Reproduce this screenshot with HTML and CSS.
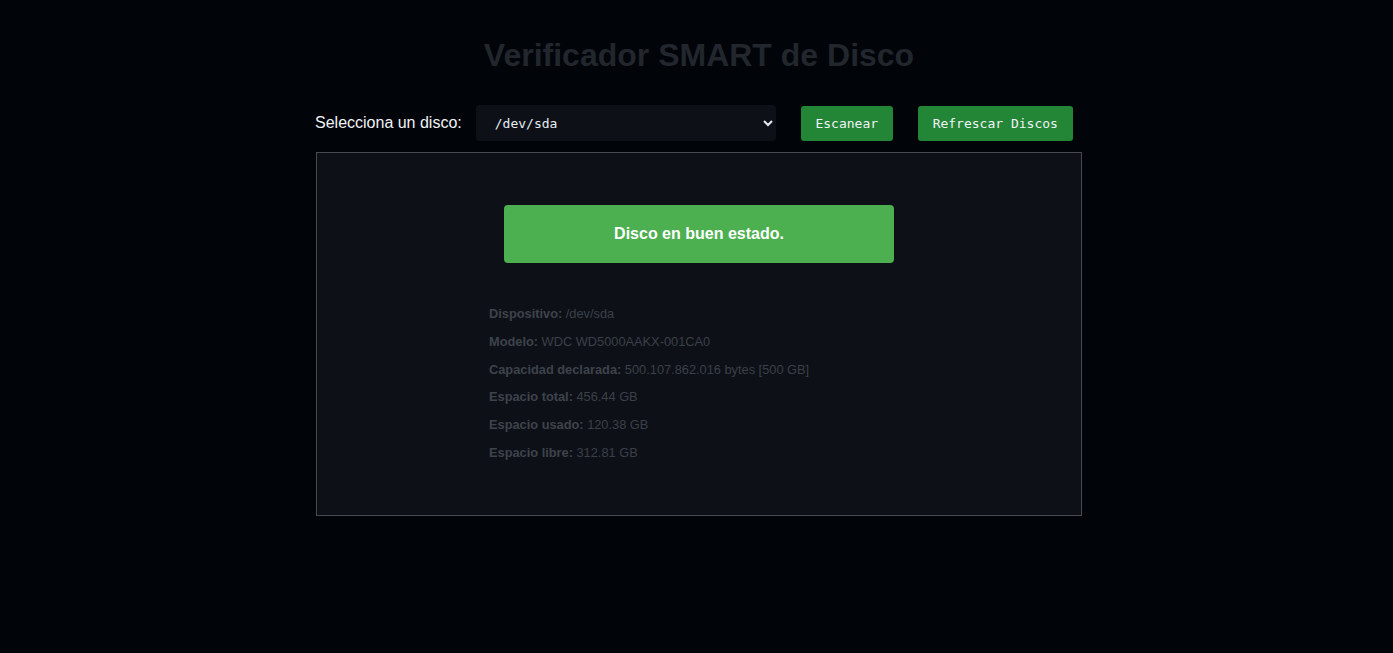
FILE: index.html
```html
<!DOCTYPE html>
<html lang="es">
<head>
<meta charset="utf-8">
<title>Verificador SMART de Disco</title>
<link rel="stylesheet" href="styles.css">
</head>
<body>
<main class="app">
  <h1 class="title">Verificador SMART de Disco</h1>
  <div class="controls">
    <label class="label" for="disk">Selecciona un disco:</label>
    <select id="disk" class="select">
      <option>/dev/sda</option>
    </select>
    <button class="btn btn-scan">Escanear</button>
    <button class="btn btn-refresh">Refrescar Discos</button>
  </div>
  <section class="panel">
    <div class="inner">
      <div class="status">Disco en buen estado.</div>
      <div class="info">
        <p class="row"><b>Dispositivo:</b> /dev/sda</p>
        <p class="row"><b>Modelo:</b> WDC WD5000AAKX-001CA0</p>
        <p class="row"><b>Capacidad declarada:</b> 500.107.862.016 bytes [500 GB]</p>
        <p class="row"><b>Espacio total:</b> 456.44 GB</p>
        <p class="row"><b>Espacio usado:</b> 120.38 GB</p>
        <p class="row"><b>Espacio libre:</b> 312.81 GB</p>
      </div>
    </div>
  </section>
</main>
</body>
</html>
```

FILE: styles.css
```css
html, body {
  margin: 0;
  padding: 0;
  background: #010409;
  font-family: "Liberation Sans", Arial, sans-serif;
}
body {
  padding-left: 5px;
}
.app {
  width: 766px;
  margin: 0 auto;
  padding-top: 37px;
}
.title {
  margin: 0;
  text-align: center;
  font-size: 32px;
  line-height: 37px;
  font-weight: bold;
  color: #22262d;
}
.controls {
  display: flex;
  align-items: center;
  margin-top: 31px;
  margin-left: -1px;
  height: 36px;
}
.label {
  color: #f0f3f6;
  font-size: 16px;
  margin-right: 14px;
}
.select {
  width: 300px;
  height: 36px;
  background: #0d1117;
  color: #e6edf3;
  border: none;
  border-radius: 4px;
  padding: 0 6px 0 15px;
  font-family: "DejaVu Sans Mono", monospace;
  font-size: 13px;
  margin-right: 25px;
}
.btn {
  height: 35px;
  margin-top: 1px;
  background: #238636;
  color: #f0f3f6;
  border: none;
  border-radius: 3px;
  font-family: "DejaVu Sans Mono", monospace;
  font-size: 13px;
  padding: 0;
  white-space: nowrap;
  text-align: center;
}
.btn-scan {
  width: 92px;
  margin-right: 25px;
}
.btn-refresh {
  width: 155px;
}
.panel {
  margin-top: 11px;
  height: 364px;
  box-sizing: border-box;
  border: 1px solid #464b53;
  background: #0d1017;
  padding-top: 52px;
}
.inner {
  width: 420px;
  margin: 0 auto;
}
.status {
  margin: 0 15px;
  height: 58px;
  border-radius: 4px;
  background: #4caf50;
  color: #ffffff;
  font-weight: bold;
  font-size: 16px;
  display: flex;
  align-items: center;
  justify-content: center;
}
.info {
  margin-top: 37px;
}
.row {
  margin: 0;
  font-size: 12.8px;
  line-height: 27.8px;
  color: #3b4048;
}
.row b {
  color: #3e434b;
}
```
